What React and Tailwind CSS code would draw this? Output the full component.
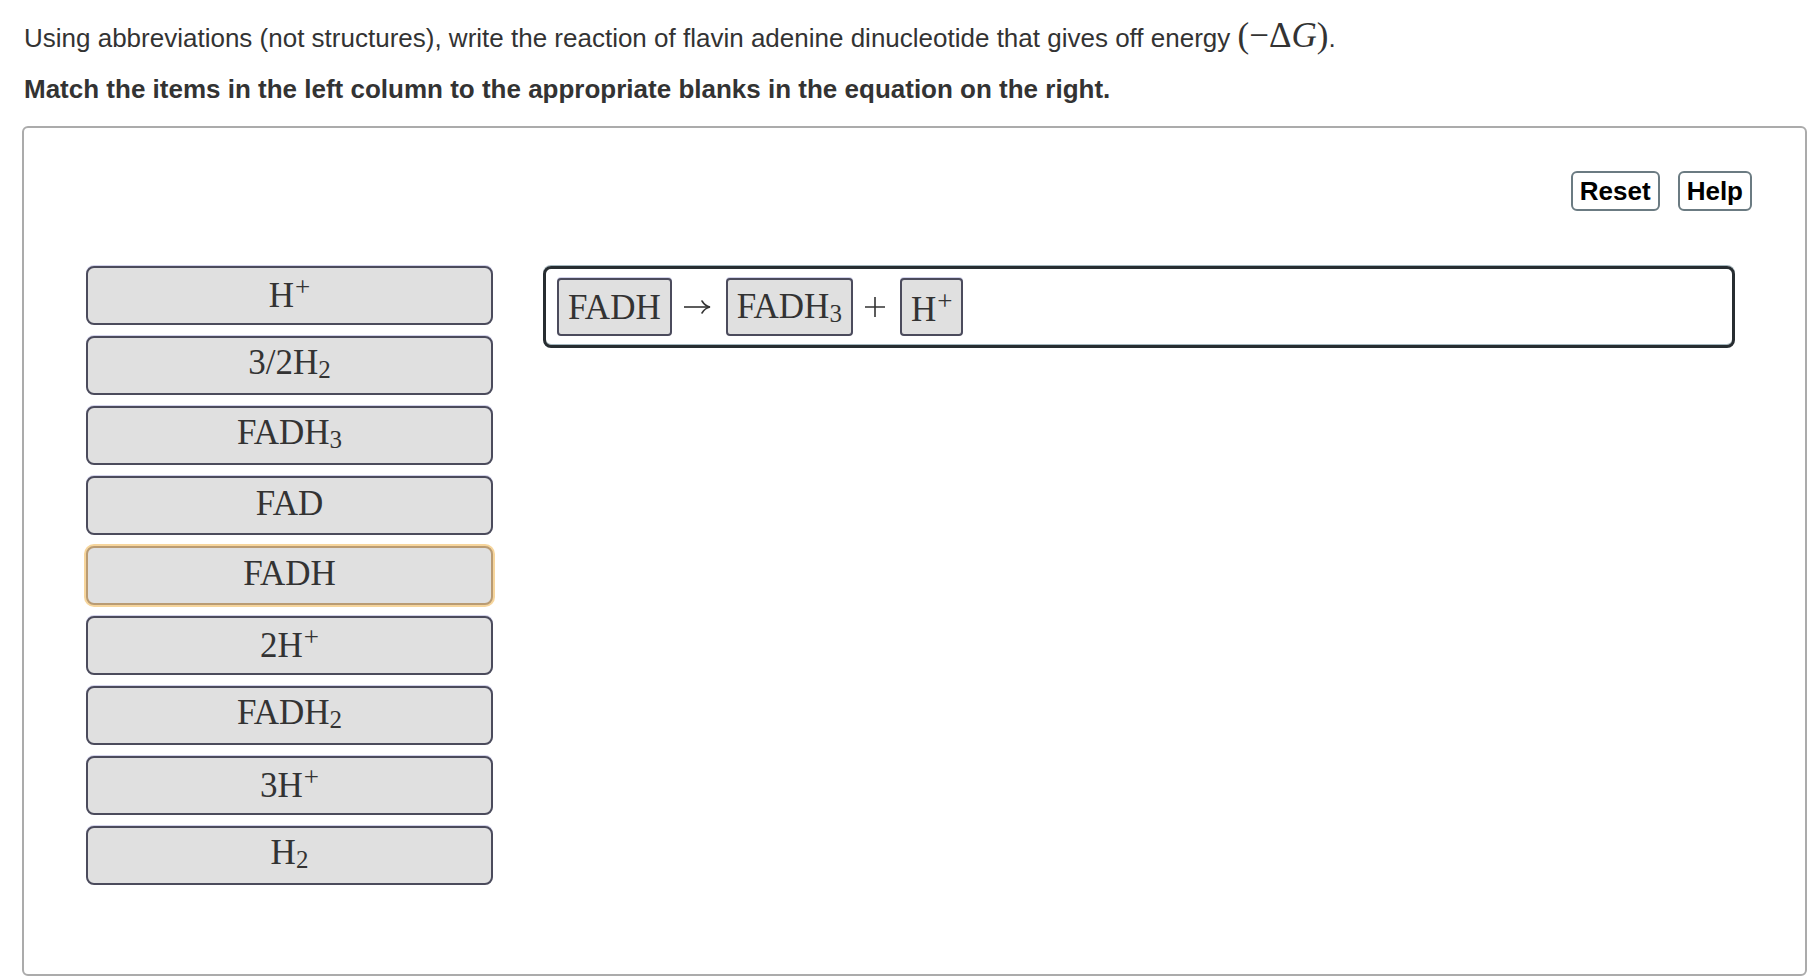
import {useState} from 'react'

const items = [
    {base: 'H', sup: '+'},
    {base: '3/2H', sub: '2'},
    {base: 'FADH', sub: '3'},
    {base: 'FAD'},
    {base: 'FADH'},
    {base: '2H', sup: '+'},
    {base: 'FADH', sub: '2'},
    {base: '3H', sup: '+'},
    {base: 'H', sub: '2'},
]

function Formula ({base, sub, sup}) {
    return (
        <span className="whitespace-nowrap">
            {base}
            {sub && <span className="text-[25px] align-[-4px]">{sub}</span>}
            {sup && <span className="text-[27px] align-[11px] ml-[1px]">{sup}</span>}
        </span>
    )
}

function Chip ({children}) {
    return (
        <div className="h-[58px] px-[9px] flex items-center bg-[#e0e0e0] border-2 border-[#4b4b5c] rounded-[4px] shadow-[0_-1px_0_#d2d2ea] text-[35px] text-[#333] leading-none">
            {children}
        </div>
    )
}

function Arrow () {
    return (
        <svg width="28" height="16" viewBox="0 0 28 16" className="ml-[11px]">
            <path d="M1 8 H26" stroke="#333" strokeWidth="1.6" fill="none"/>
            <path d="M19 2 Q22 7 27 8 Q22 9 19 14" stroke="#333" strokeWidth="1.6" fill="none" strokeLinecap="round"/>
        </svg>
    )
}

function Plus () {
    return (
        <svg width="22" height="22" viewBox="0 0 22 22" className="ml-[11px]">
            <path d="M11 1 V21 M1 11 H21" stroke="#333" strokeWidth="1.6" fill="none"/>
        </svg>
    )
}

function App () {

    const [selected, setSelected] = useState(4)

    return (
        <div className="w-[1820px] h-[980px] bg-white overflow-hidden font-['Liberation_Sans',Arial,sans-serif] text-[#333]">
            <div className="pl-[24px] pt-[24px]">
                <p className="h-[29px] text-[26px] leading-[29px] whitespace-nowrap">
                    Using abbreviations (not structures), write the reaction of flavin adenine dinucleotide that gives off energy{' '}
                    <span className="font-['Liberation_Serif','Times_New_Roman',serif] text-[35px] leading-[18px]">
                        (−Δ<span className="italic">G</span>)
                    </span>.
                </p>
                <p className="mt-[22px] text-[26px] leading-[29px] font-bold whitespace-nowrap">
                    Match the items in the left column to the appropriate blanks in the equation on the right.
                </p>
            </div>

            <div className="ml-[22px] mt-[22px] w-[1785px] h-[850px] border-2 border-[#ababab] rounded-[6px] pt-[43px] pr-[53px] pl-[62px]">
                <div className="flex justify-end gap-[18px]">
                    <button className="h-[40px] px-[7px] border-2 border-[#6b7b82] rounded-[6px] bg-white text-[26px] font-bold text-black leading-none">Reset</button>
                    <button className="h-[40px] px-[7px] border-2 border-[#6b7b82] rounded-[6px] bg-white text-[26px] font-bold text-black leading-none">Help</button>
                </div>

                <div className="mt-[55px] flex items-start gap-[50px]">
                    <div className="w-[407px] flex flex-col gap-[11px]">
                        {items.map((it, i) => (
                            <div
                                key={i}
                                onClick={() => setSelected(i)}
                                className={
                                    i === selected
                                        ? "h-[59px] flex items-center justify-center bg-[#e0e0e0] border-2 border-[#b99b73] rounded-[8px] shadow-[0_0_0_2px_#f6d59c] font-['Liberation_Serif','Times_New_Roman',serif] text-[35px] text-[#333] leading-none pb-[4px] cursor-pointer"
                                        : "h-[59px] flex items-center justify-center bg-[#e0e0e0] border-2 border-[#4b4b5c] rounded-[8px] shadow-[0_-1px_0_#d2d2ea] font-['Liberation_Serif','Times_New_Roman',serif] text-[35px] text-[#333] leading-none pb-[4px] cursor-pointer"
                                }
                            >
                                <Formula {...it}/>
                            </div>
                        ))}
                    </div>

                    <div className="w-[1192px] h-[82px] border-[3px] border-[#272d31] rounded-[8px] shadow-[0_-1px_0_#a3b6be,inset_0_-1px_0_#a3b6be] pl-[11px] pt-[9px] flex items-start font-['Liberation_Serif','Times_New_Roman',serif]">
                        <div className="h-[58px] flex items-center">
                            <Chip><Formula base="FADH"/></Chip>
                            <Arrow/>
                            <div className="ml-[15px]"><Chip><Formula base="FADH" sub="3"/></Chip></div>
                            <Plus/>
                            <div className="ml-[14px]"><Chip><Formula base="H" sup="+"/></Chip></div>
                        </div>
                    </div>
                </div>
            </div>
        </div>
    )
}

export default App
